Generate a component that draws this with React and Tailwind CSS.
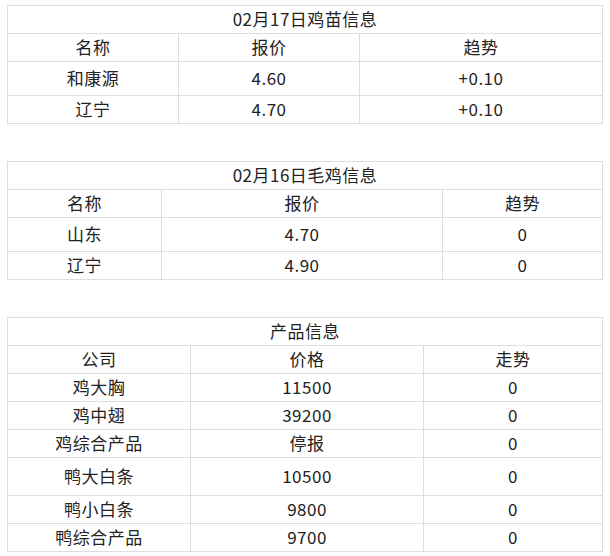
const tables = [
  {
    title: '02月17日鸡苗信息',
    widths: ['w-[171px]', 'w-[181px]', 'w-[243px]'],
    head: ['名称', '报价', '趋势'],
    rows: [
      { h: 'h-[34px]', cells: ['和康源', '4.60', '+0.10'] },
      { h: 'h-[28px]', cells: ['辽宁', '4.70', '+0.10'] },
    ],
  },
  {
    title: '02月16日毛鸡信息',
    widths: ['w-[154px]', 'w-[281px]', 'w-[160px]'],
    head: ['名称', '报价', '趋势'],
    rows: [
      { h: 'h-[34px]', cells: ['山东', '4.70', '0'] },
      { h: 'h-[28px]', cells: ['辽宁', '4.90', '0'] },
    ],
  },
  {
    title: '产品信息',
    widths: ['w-[183px]', 'w-[233px]', 'w-[179px]'],
    head: ['公司', '价格', '走势'],
    rows: [
      { h: 'h-[28px]', cells: ['鸡大胸', '11500', '0'] },
      { h: 'h-[28px]', cells: ['鸡中翅', '39200', '0'] },
      { h: 'h-[28px]', cells: ['鸡综合产品', '停报', '0'] },
      { h: 'h-[38px]', cells: ['鸭大白条', '10500', '0'] },
      { h: 'h-[28px]', cells: ['鸭小白条', '9800', '0'] },
      { h: 'h-[28px]', cells: ['鸭综合产品', '9700', '0'] },
    ],
  },
];

const Cell = ({ className, children }) => (
  <div className={`flex items-center justify-center pb-[2px] border-r border-b border-[#dddddd] shrink-0 ${className}`}>
    {children}
  </div>
);

const InfoTable = ({ table }) => (
  <div className="w-[596px] border-l border-t border-[#dddddd]">
    <Cell className="w-[595px] h-[28px]">{table.title}</Cell>
    <div className="flex">
      {table.head.map((text, i) => (
        <Cell key={i} className={`${table.widths[i]} h-[28px]`}>
          {text}
        </Cell>
      ))}
    </div>
    {table.rows.map((row, r) => (
      <div key={r} className="flex">
        {row.cells.map((text, i) => (
          <Cell key={i} className={`${table.widths[i]} ${row.h}`}>
            {text}
          </Cell>
        ))}
      </div>
    ))}
  </div>
);

export default function App() {
  return (
    <div
      className="w-[610px] h-[556px] bg-white pt-[5px] pl-[7px] flex flex-col gap-[37px] text-[17px] leading-none tracking-[0.5px] text-[#222222]"
      style={{ fontFamily: '"Noto Sans CJK SC", "Noto Sans", sans-serif' }}
    >
      {tables.map((t, i) => (
        <InfoTable key={i} table={t} />
      ))}
    </div>
  );
}
